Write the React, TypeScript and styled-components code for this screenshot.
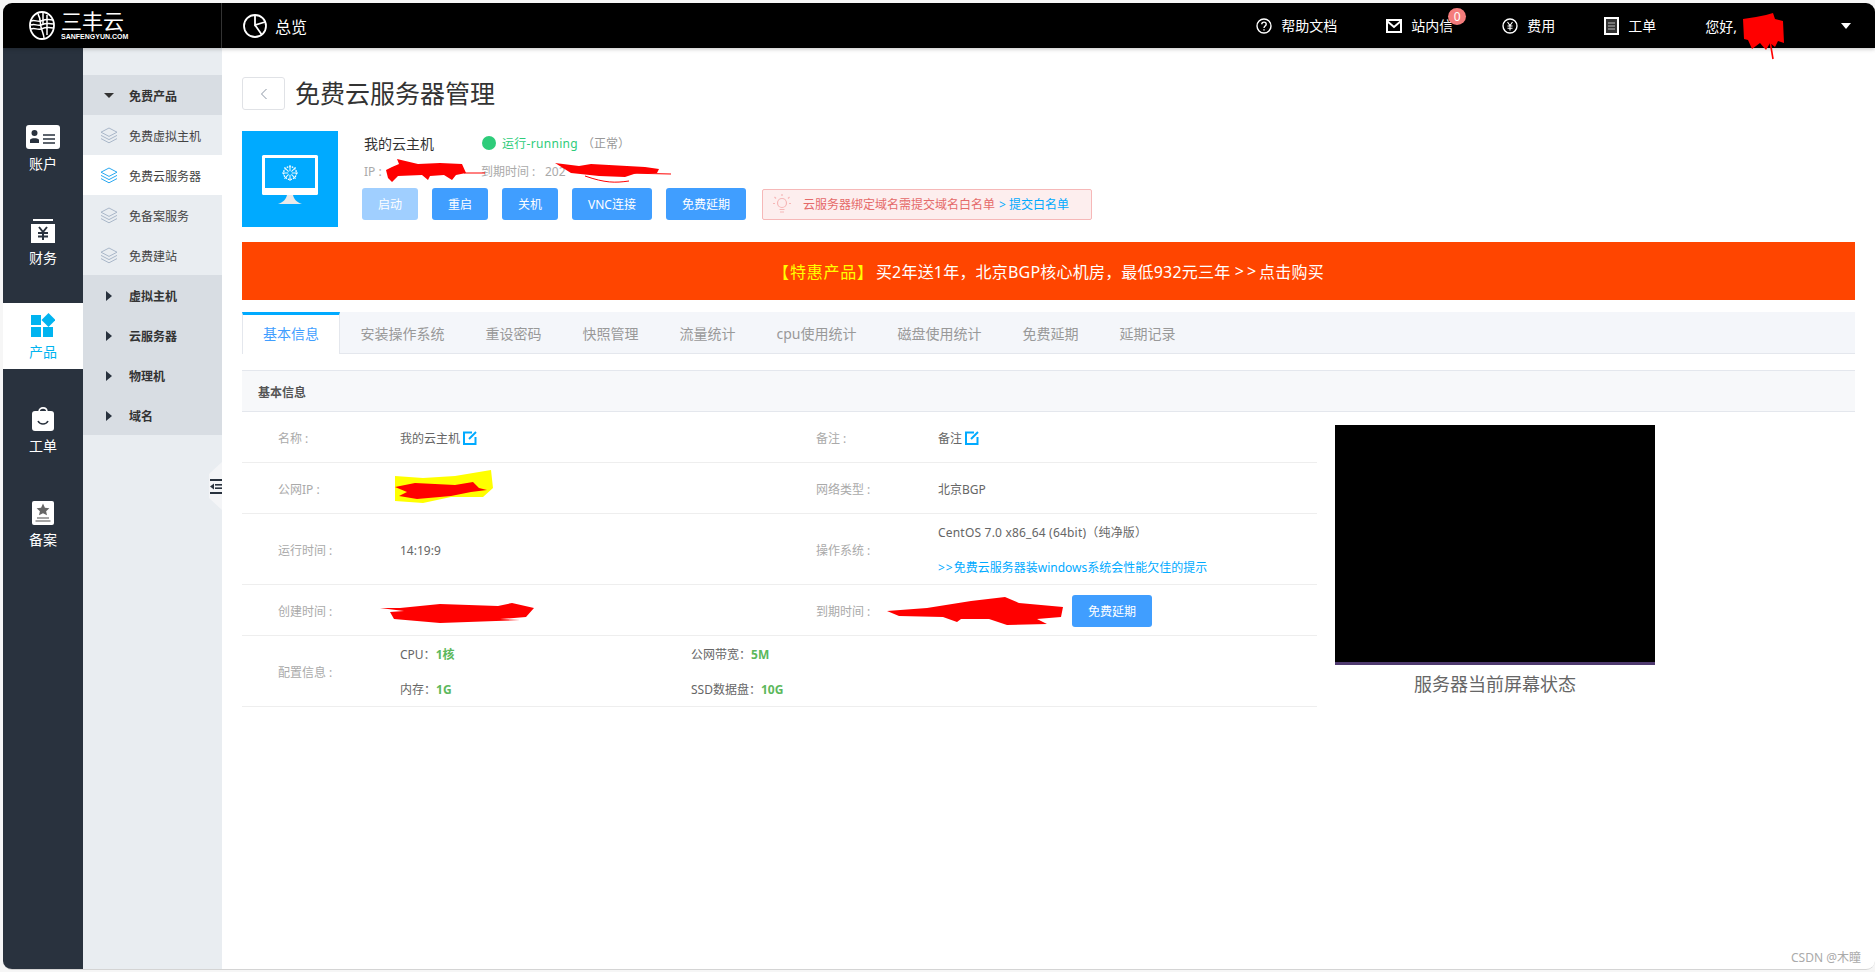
import React from 'react';
import styled, { createGlobalStyle } from 'styled-components';

const GlobalStyle = createGlobalStyle`
  html, body {
    margin: 0;
    padding: 0;
    background: #f6f6f6;
    font-family: "Noto Sans", "Noto Sans CJK SC", "Liberation Sans", sans-serif;
  }
  * { box-sizing: border-box; }
`;

const Page = styled.div`
  width: 1875px;
  height: 972px;
  padding: 3px 0 2px 3px;
  overflow: hidden;
`;

const Frame = styled.div`
  position: relative;
  height: 100%;
  display: flex;
  flex-direction: column;
  background: #fff;
  border-radius: 9px;
  border-bottom: 1px solid #d4d4d4;
  overflow: hidden;
`;

const TopBar = styled.header`
  position: relative;
  z-index: 5;
  flex: 0 0 45px;
  display: flex;
  align-items: center;
  background: #000;
  color: #fff;
  box-shadow: 0 1px 4px rgba(0, 0, 0, 0.25);
`;

const Brand = styled.div`
  width: 219px;
  height: 100%;
  display: flex;
  align-items: center;
  padding-left: 26px;
  gap: 6px;
  border-right: 1px solid #333;
`;

const BrandText = styled.div`
  display: flex;
  flex-direction: column;
  width: 64px;
`;

const BrandName = styled.span`
  font-size: 21px;
  line-height: 22px;
  font-weight: 400;
`;

const BrandSub = styled.span`
  margin-top: 1px;
  font-family: "Liberation Sans", sans-serif;
  font-size: 7px;
  line-height: 8px;
  font-weight: 700;
  white-space: nowrap;
`;

const Overview = styled.div`
  display: flex;
  align-items: center;
  gap: 8px;
  padding-left: 21px;
  font-size: 16px;
`;

const TopNav = styled.nav`
  margin-left: auto;
  display: flex;
  align-items: center;
  padding-right: 24px;
`;

const TopItem = styled.div`
  position: relative;
  display: flex;
  align-items: center;
  gap: 9px;
  margin-right: 49px;
  font-size: 14px;
  line-height: 20px;
`;

const Badge = styled.span`
  position: absolute;
  right: -13px;
  top: -8px;
  width: 18px;
  height: 17px;
  border-radius: 50%;
  background: #f47c7c;
  font-size: 12px;
  line-height: 17px;
  text-align: center;
`;

const Greeting = styled.span`
  font-size: 14px;
  margin-right: 5px;
`;

const NameSlot = styled.span`
  position: relative;
  width: 42px;
  height: 20px;
  margin-right: 57px;
`;

const Caret = styled.span`
  width: 0;
  height: 0;
  border-left: 5px solid transparent;
  border-right: 5px solid transparent;
  border-top: 6px solid #fff;
`;

const Scribble = styled.svg<{ $x: number; $y: number }>`
  position: absolute;
  left: ${(p) => p.$x}px;
  top: ${(p) => p.$y}px;
  z-index: 3;
  overflow: visible;
  pointer-events: none;
`;

const Body = styled.div`
  flex: 1;
  display: flex;
  min-height: 0;
`;

const Rail = styled.aside`
  flex: 0 0 80px;
  display: flex;
  flex-direction: column;
  gap: 28px;
  padding-top: 67px;
  background: #29323e;
`;

const RailItem = styled.div<{ $active?: boolean }>`
  height: 66px;
  display: flex;
  flex-direction: column;
  align-items: center;
  padding-top: 10px;
  background: ${(p) => (p.$active ? '#fff' : 'transparent')};
  color: ${(p) => (p.$active ? '#00b4f0' : '#fff')};
`;

const RailIcon = styled.svg`
  display: block;
  flex: none;
`;

const RailLabel = styled.span`
  margin-top: 5px;
  font-size: 14px;
  line-height: 20px;
`;

const SubNav = styled.aside`
  position: relative;
  flex: 0 0 139px;
  padding-top: 27px;
  background: #e9edf1;
`;

const SubRow = styled.div<{ $head?: boolean; $active?: boolean }>`
  height: 40px;
  display: flex;
  align-items: center;
  padding-top: 1px;
  font-size: 12px;
  font-weight: ${(p) => (p.$head ? 700 : 400)};
  color: ${(p) => (p.$head ? '#333' : '#444')};
  background: ${(p) => (p.$head ? '#d8dde3' : p.$active ? '#fff' : 'transparent')};
`;

const SubIconSlot = styled.span`
  width: 46px;
  display: flex;
  justify-content: center;
  padding-left: 6px;
`;

const TriDown = styled.span`
  width: 0;
  height: 0;
  border-left: 5px solid transparent;
  border-right: 5px solid transparent;
  border-top: 5px solid #333;
`;

const TriRight = styled.span`
  width: 0;
  height: 0;
  border-top: 5px solid transparent;
  border-bottom: 5px solid transparent;
  border-left: 6px solid #29323e;
`;

const Collapse = styled.div`
  position: absolute;
  right: 0;
  top: 414px;
  width: 13px;
  height: 48px;
  display: flex;
  align-items: center;
  justify-content: flex-end;
  background: #f4f5f7;
  clip-path: polygon(100% 0, 100% 100%, 0 75%, 0 25%);
`;

const Main = styled.main`
  flex: 1;
  min-width: 0;
  padding: 29px 20px 0;
`;

const TitleRow = styled.div`
  display: flex;
  align-items: center;
  gap: 10px;
  height: 33px;
`;

const BackButton = styled.button`
  width: 43px;
  height: 33px;
  padding: 0;
  display: flex;
  align-items: center;
  justify-content: center;
  background: #fff;
  border: 1px solid #e0e2e6;
  border-radius: 3px;
`;

const PageTitle = styled.h1`
  margin: 0;
  font-size: 25px;
  line-height: 33px;
  font-weight: 400;
  color: #333;
`;

const ServerCard = styled.section`
  margin-top: 21px;
  display: flex;
  height: 96px;
`;

const ServerThumb = styled.div`
  flex: 0 0 96px;
  background: #00aaff;
`;

const ServerInfo = styled.div`
  margin-left: 26px;
  display: flex;
  flex-direction: column;
`;

const NameLine = styled.div`
  display: flex;
  align-items: center;
  height: 23px;
  font-size: 14px;
  color: #333;
`;

const StatusDot = styled.span`
  width: 14px;
  height: 14px;
  margin: 0 6px 0 48px;
  border-radius: 50%;
  background: #2ecc7a;
`;

const StatusText = styled.span`
  font-size: 12px;
  letter-spacing: 0.3px;
  color: #2ecc7a;
`;

const StatusNote = styled.span`
  margin-left: 4px;
  font-size: 12px;
  color: #999;
`;

const IpLine = styled.div`
  position: relative;
  height: 22px;
  margin-top: 6px;
  display: flex;
  align-items: center;
  font-size: 12px;
  color: #aaa;
`;

const IpLabel = styled.span`
  width: 117px;
`;

const ExpireLabel = styled.span`
  width: 64px;
`;

const ActionRow = styled.div`
  margin-top: 6px;
  margin-left: -2px;
  display: flex;
  align-items: center;
  gap: 14px;
`;

const ActionButton = styled.button<{ $disabled?: boolean }>`
  height: 32px;
  padding: 0 16px;
  border: 0;
  border-radius: 3px;
  font-family: inherit;
  font-size: 12px;
  color: #fff;
  white-space: nowrap;
  background: ${(p) => (p.$disabled ? '#a0cfff' : '#409eff')};
`;

const Notice = styled.div`
  margin-left: 2px;
  width: 330px;
  height: 31px;
  display: flex;
  align-items: center;
  padding-left: 10px;
  gap: 12px;
  font-size: 12px;
  color: #e56a6a;
  background: #fdeeee;
  border: 1px solid #f6b8b8;
  border-radius: 2px;
`;

const NoticeLink = styled.span`
  margin-left: 4px;
  color: #00aaff;
`;

const Banner = styled.div`
  margin-top: 15px;
  height: 58px;
  display: flex;
  align-items: center;
  justify-content: center;
  background: #ff4500;
  color: #fff;
  font-size: 16px;
  letter-spacing: 0.2px;
  white-space: pre;
`;

const BannerTag = styled.span`
  color: #ffff00;
  letter-spacing: 0.8px;
  margin-right: 2px;
`;

const Arrows = styled.span<{ $gap: number }>`
  letter-spacing: ${(p) => p.$gap}px;
`;

const Tabs = styled.div`
  margin-top: 12px;
  height: 42px;
  display: flex;
  background: #f4f6fa;
  border-bottom: 1px solid #e4e7ed;
`;

const Tab = styled.div<{ $active?: boolean }>`
  height: ${(p) => (p.$active ? 42 : 41)}px;
  padding: ${(p) => (p.$active ? '0 20px 3px' : '0 20.5px')};
  display: flex;
  align-items: center;
  font-size: 14px;
  color: ${(p) => (p.$active ? '#409eff' : '#999')};
  background: ${(p) => (p.$active ? '#fff' : 'transparent')};
  border-top: ${(p) => (p.$active ? '3px solid #00aaff' : '0')};
  border-left: ${(p) => (p.$active ? '1px solid #e4e7ed' : '0')};
  border-right: ${(p) => (p.$active ? '1px solid #e4e7ed' : '0')};
`;

const SectionHead = styled.div`
  margin-top: 16px;
  height: 42px;
  display: flex;
  align-items: center;
  padding: 1px 0 0 16px;
  font-size: 12px;
  font-weight: 700;
  color: #555;
  background: #f7f8fa;
  border-top: 1px solid #e4e7ed;
  border-bottom: 1px solid #e4e7ed;
`;

const Detail = styled.div`
  display: flex;
  align-items: flex-start;
`;

const Table = styled.div`
  flex: 0 0 1075px;
`;

const Row = styled.div<{ $tall?: boolean }>`
  position: relative;
  height: ${(p) => (p.$tall ? 71 : 51)}px;
  display: grid;
  grid-template-columns: 538px 1fr;
  padding-top: 1px;
  border-bottom: 1px solid #eee;
  font-size: 12px;
  color: #666;
`;

const Cell = styled.div`
  position: relative;
  display: flex;
  align-items: center;
`;

const Label = styled.span`
  flex: 0 0 158px;
  padding-left: 36px;
  color: #aaa;
  white-space: pre;
`;

const Lines = styled.div`
  display: flex;
  flex-direction: column;
  line-height: 35px;
`;

const OsName = styled.span`
  letter-spacing: 0.2px;
`;

const BlueLink = styled.span`
  color: #00aaff;
`;

const ConfigGrid = styled.div`
  flex: none;
  display: grid;
  grid-template-columns: 291px max-content;
  line-height: 35px;
  white-space: nowrap;
`;

const Spec = styled.b`
  color: #5cb85c;
  font-weight: 700;
`;

const EditIcon = styled.svg`
  margin-left: 3px;
`;

const RenewButton = styled.button`
  position: absolute;
  left: 292px;
  top: 9px;
  width: 80px;
  height: 32px;
  border: 0;
  border-radius: 3px;
  font-family: inherit;
  font-size: 12px;
  color: #fff;
  background: #409eff;
`;

const ScreenPane = styled.div`
  margin: 13px 0 0 18px;
  width: 320px;
`;

const ScreenBox = styled.div`
  height: 240px;
  background: #000;
  border-bottom: 3px solid #4f3a6f;
`;

const ScreenCaption = styled.div`
  margin-top: 7px;
  font-size: 18px;
  line-height: 24px;
  text-align: center;
  color: #666;
`;

const Watermark = styled.div`
  position: absolute;
  right: 14px;
  bottom: 3px;
  font-size: 12px;
  line-height: 16px;
  color: #aaa;
`;

const Layers = ({ color }: { color: string }) => (
  <svg width="18" height="17" viewBox="0 0 18 17" fill="none" stroke={color} strokeWidth="1">
    <path d="M9 1 17 5.2 9 9.4 1 5.2Z" />
    <path d="M1 8.4 9 12.6 17 8.4" />
    <path d="M1 11.6 9 15.8 17 11.6" />
  </svg>
);

const Edit = () => (
  <EditIcon width="14" height="14" viewBox="0 0 14 14" fill="none" stroke="#00aaff" strokeWidth="2">
    <path d="M9 1.5H1V13H12.5V6" />
    <path d="M6 8 13 1" />
  </EditIcon>
);

const Red = '#ff0000';

const App = () => (
  <Page>
    <GlobalStyle />
    <Frame>
      <TopBar>
        <Brand>
          <svg width="26" height="29" viewBox="0 0 26 29" fill="none" stroke="#fff">
            <ellipse cx="13" cy="14.5" rx="12" ry="13.5" strokeWidth="1.8" />
            <path d="M2 10c4-2 6 1.5 10 0s7-2 12-1M2 14c4-2 6 1.5 10 0s7-2 12-1M2 18c4-2 6 1.5 10 0s7-2 12-1" strokeWidth="1.5" />
            <path d="M9 3C12 8 11 12 12 16S15 24 15 27M14 2V13M18 4V24" strokeWidth="1.5" />
          </svg>
          <BrandText>
            <BrandName>三丰云</BrandName>
            <BrandSub>SANFENGYUN.COM</BrandSub>
          </BrandText>
        </Brand>
        <Overview>
          <svg width="24" height="24" viewBox="0 0 24 24" fill="none" stroke="#fff" strokeWidth="1.8">
            <circle cx="12" cy="12" r="11" />
            <path d="M12 1V11L22 8M12 11 19 21" />
          </svg>
          总览
        </Overview>
        <TopNav>
          <TopItem>
            <svg width="16" height="16" viewBox="0 0 16 16" fill="none" stroke="#fff" strokeWidth="1.4">
              <circle cx="8" cy="8" r="7" />
              <path d="M5.8 6.2C5.8 3.4 10.2 3.4 10.2 6.2 10.2 8 8 8 8 10M8 11.2V12.6" />
            </svg>
            帮助文档
          </TopItem>
          <TopItem>
            <svg width="16" height="14" viewBox="0 0 16 14" fill="none" stroke="#fff" strokeWidth="2">
              <rect x="1" y="1" width="14" height="12" />
              <path d="M1 2 8 8 15 2" />
            </svg>
            站内信
            <Badge>0</Badge>
          </TopItem>
          <TopItem>
            <svg width="16" height="16" viewBox="0 0 16 16" fill="none" stroke="#fff" strokeWidth="1.4">
              <circle cx="8" cy="8" r="7" />
              <path d="M5.5 4 8 7.5 10.5 4M8 7.5V12.5M5.5 8H10.5M5.5 10.2H10.5" strokeWidth="1.1" />
            </svg>
            费用
          </TopItem>
          <TopItem>
            <svg width="15" height="18" viewBox="0 0 15 18" fill="none" stroke="#fff" strokeWidth="2">
              <rect x="1" y="1" width="13" height="16" fill="#333" />
              <path d="M4 6H11M4 9H11M4 12H11" stroke="#bbb" strokeWidth="1.2" />
            </svg>
            工单
          </TopItem>
          <Greeting>您好,</Greeting>
          <NameSlot>
            <Scribble $x={0} $y={-3} width="42" height="46" viewBox="0 0 42 46">
              <path d="M1 6 14 4 24 2 31 0 33 6 41 8 42 30 36 28 33 34 28 30 24 37 18 30 10 36 6 27 2 26Z" fill={Red} />
              <path d="M28 28 31 46" stroke={Red} strokeWidth="1.6" fill="none" />
            </Scribble>
          </NameSlot>
          <Caret />
        </TopNav>
      </TopBar>
      <Body>
        <Rail>
          <RailItem>
            <RailIcon width="34" height="24" viewBox="0 0 34 24">
              <rect width="34" height="24" rx="3" fill="#fff" />
              <circle cx="8.5" cy="8" r="3" fill="#29323e" />
              <path d="M4 18V15C4 12.5 13 12.5 13 15V18Z" fill="#29323e" />
              <path d="M17 10H29M17 14H29M17 18H29" stroke="#29323e" strokeWidth="1.6" />
            </RailIcon>
            <RailLabel>账户</RailLabel>
          </RailItem>
          <RailItem>
            <RailIcon width="24" height="24" viewBox="0 0 24 24">
              <rect x="2" width="20" height="2" fill="#fff" />
              <rect y="5" width="24" height="19" fill="#fff" />
              <path d="M8 8 12 13 16 8M12 13V21M7 14H17M7 17.5H17" stroke="#29323e" strokeWidth="2" fill="none" />
            </RailIcon>
            <RailLabel>财务</RailLabel>
          </RailItem>
          <RailItem $active>
            <RailIcon width="24" height="24" viewBox="0 0 24 24" fill="#00b4f0">
              <rect y="2" width="10" height="10" />
              <path d="M17.5 0 24.5 7 17.5 14 10.5 7Z" />
              <rect y="14" width="10" height="10" />
              <rect x="12" y="14" width="10" height="10" />
            </RailIcon>
            <RailLabel>产品</RailLabel>
          </RailItem>
          <RailItem>
            <RailIcon width="22" height="24" viewBox="0 0 22 24">
              <path d="M7 5C7 -0.5 15 -0.5 15 5" fill="none" stroke="#fff" strokeWidth="1.6" />
              <rect y="4" width="22" height="20" rx="3" fill="#fff" />
              <path d="M6 14C8 18 14 18 16 14" fill="none" stroke="#29323e" strokeWidth="1.6" />
            </RailIcon>
            <RailLabel>工单</RailLabel>
          </RailItem>
          <RailItem>
            <RailIcon width="22" height="24" viewBox="0 0 22 24">
              <rect width="22" height="24" rx="2" fill="#fff" />
              <path d="M11 2.5 13.4 7.6 19 8.2 14.9 12 16 17 11 14.6 6 17 7.1 12 3 8.2 8.6 7.6Z" fill="#666" transform="translate(2.2 0.6) scale(0.8)" />
              <path d="M5 17H17M3.5 20H18.5" stroke="#888" strokeWidth="1.4" />
            </RailIcon>
            <RailLabel>备案</RailLabel>
          </RailItem>
        </Rail>
        <SubNav>
          <SubRow $head>
            <SubIconSlot><TriDown /></SubIconSlot>免费产品
          </SubRow>
          <SubRow>
            <SubIconSlot><Layers color="#a9b7c9" /></SubIconSlot>免费虚拟主机
          </SubRow>
          <SubRow $active>
            <SubIconSlot><Layers color="#2aa8f0" /></SubIconSlot>免费云服务器
          </SubRow>
          <SubRow>
            <SubIconSlot><Layers color="#a9b7c9" /></SubIconSlot>免备案服务
          </SubRow>
          <SubRow>
            <SubIconSlot><Layers color="#a9b7c9" /></SubIconSlot>免费建站
          </SubRow>
          <SubRow $head>
            <SubIconSlot><TriRight /></SubIconSlot>虚拟主机
          </SubRow>
          <SubRow $head>
            <SubIconSlot><TriRight /></SubIconSlot>云服务器
          </SubRow>
          <SubRow $head>
            <SubIconSlot><TriRight /></SubIconSlot>物理机
          </SubRow>
          <SubRow $head>
            <SubIconSlot><TriRight /></SubIconSlot>域名
          </SubRow>
          <Collapse>
            <svg width="12" height="15" viewBox="0 0 12 15" fill="#29323e">
              <rect width="12" height="2" />
              <rect y="13" width="12" height="2" />
              <rect x="5" y="5" width="7" height="1.6" />
              <rect x="5" y="8.4" width="7" height="1.6" />
              <path d="M0 7.5 4 4.5V10.5Z" />
            </svg>
          </Collapse>
        </SubNav>
        <Main>
          <TitleRow>
            <BackButton>
              <svg width="8" height="12" viewBox="0 0 8 12" fill="none" stroke="#8a94a3" strokeWidth="1">
                <path d="M6.5 1 1.5 6 6.5 11" />
              </svg>
            </BackButton>
            <PageTitle>免费云服务器管理</PageTitle>
          </TitleRow>
          <ServerCard>
            <ServerThumb>
              <svg width="96" height="96" viewBox="0 0 96 96">
                <rect x="20" y="24" width="56" height="40" rx="1.5" fill="#fff" />
                <rect x="23" y="27" width="50" height="30" fill="#00aaff" />
                <path d="M36 73C42 71 44 68 45 64H51C52 68 54 71 60 73Z" fill="#e9e9e9" />
                <circle cx="48" cy="42" r="6.4" fill="none" stroke="#fff" strokeWidth="1.4" strokeDasharray="1.6 1" />
                <path d="M48 34V50M40 42H56M42.4 36.4 53.6 47.6M53.6 36.4 42.4 47.6" stroke="#e6f7ff" strokeWidth="1.1" />
                <circle cx="48" cy="42" r="2" fill="#00aaff" />
              </svg>
            </ServerThumb>
            <ServerInfo>
              <NameLine>
                我的云主机
                <StatusDot />
                <StatusText>运行-running</StatusText>
                <StatusNote>（正常）</StatusNote>
              </NameLine>
              <IpLine>
                <IpLabel>IP :</IpLabel>
                <ExpireLabel>到期时间 :</ExpireLabel>
                202
                <Scribble $x={22} $y={-1} width="100" height="23" viewBox="0 0 100 23">
                  <path d="M0 11 6 8 13 5 11 0 32 5 54 4 76 5 80 14 70 16 66 21 58 16 44 17 42 21 36 16 12 17 6 23 2 19Z" fill={Red} />
                  <path d="M78 14H99" stroke={Red} strokeWidth="1" />
                </Scribble>
                <Scribble $x={191} $y={3} width="116" height="20" viewBox="0 0 116 20">
                  <path d="M0 0 24 3 36 1 90 4 104 6 102 10 82 10 70 14 44 13 16 10 8 5Z" fill={Red} />
                  <path d="M70 10 116 11M30 13C50 20 60 20 74 18" stroke={Red} strokeWidth="1" fill="none" />
                </Scribble>
              </IpLine>
              <ActionRow>
                <ActionButton $disabled>启动</ActionButton>
                <ActionButton>重启</ActionButton>
                <ActionButton>关机</ActionButton>
                <ActionButton>VNC连接</ActionButton>
                <ActionButton>免费延期</ActionButton>
                <Notice>
                  <svg width="18" height="20" viewBox="0 0 18 20" fill="none" stroke="#f6b7b7" strokeWidth="1.2">
                    <circle cx="9" cy="9" r="4.5" />
                    <path d="M6.5 15.5H11.5M7 18H11M9 0V2M1.5 3 3 4.5M16.5 3 15 4.5M0 9.5H2M16 9.5H18" />
                  </svg>
                  <span>
                    云服务器绑定域名需提交域名白名单
                    <NoticeLink>&gt; 提交白名单</NoticeLink>
                  </span>
                </Notice>
              </ActionRow>
            </ServerInfo>
          </ServerCard>
          <Banner>
            <BannerTag>【特惠产品】</BannerTag>
            买2年送1年，北京BGP核心机房，最低932元三年 <Arrows $gap={3}>&gt;&gt;</Arrows>点击购买
          </Banner>
          <Tabs>
            <Tab $active>基本信息</Tab>
            <Tab>安装操作系统</Tab>
            <Tab>重设密码</Tab>
            <Tab>快照管理</Tab>
            <Tab>流量统计</Tab>
            <Tab>cpu使用统计</Tab>
            <Tab>磁盘使用统计</Tab>
            <Tab>免费延期</Tab>
            <Tab>延期记录</Tab>
          </Tabs>
          <SectionHead>基本信息</SectionHead>
          <Detail>
            <Table>
              <Row>
                <Cell>
                  <Label>名称 :</Label>
                  我的云主机
                  <Edit />
                </Cell>
                <Cell>
                  <Label>备注 :</Label>
                  备注
                  <Edit />
                </Cell>
              </Row>
              <Row>
                <Cell>
                  <Label>公网IP :</Label>
                  <Scribble $x={153} $y={6} width="98" height="33" viewBox="0 0 98 33">
                    <path d="M0 6 28 8 60 6 96 0 98 18 88 27 56 27 28 33 0 31Z" fill="#ffff00" />
                    <path d="M0 17 20 13 60 15 78 12 84 18 92 20 76 22 56 26 22 29 4 26 12 22Z" fill={Red} />
                  </Scribble>
                </Cell>
                <Cell>
                  <Label>网络类型 :</Label>
                  北京BGP
                </Cell>
              </Row>
              <Row $tall>
                <Cell>
                  <Label>运行时间 :</Label>
                  14:19:9
                </Cell>
                <Cell>
                  <Label>操作系统 :</Label>
                  <Lines>
                    <OsName>CentOS 7.0 x86_64 (64bit)（纯净版）</OsName>
                    <BlueLink><Arrows $gap={1}>&gt;&gt;</Arrows>免费云服务器装windows系统会性能欠佳的提示</BlueLink>
                  </Lines>
                </Cell>
              </Row>
              <Row>
                <Cell>
                  <Label>创建时间 :</Label>
                  <Scribble $x={138} $y={17} width="154" height="20" viewBox="0 0 154 20">
                    <path d="M0 5 20 5 60 1 118 3 132 0 154 5 146 14 120 16 140 17 60 20 14 16 10 9 24 8Z" fill={Red} />
                  </Scribble>
                </Cell>
                <Cell>
                  <Label>到期时间 :</Label>
                  <Scribble $x={107} $y={11} width="176" height="28" viewBox="0 0 176 28">
                    <path d="M0 14 40 11 84 4 118 0 132 6 176 10 174 20 150 22 160 27 120 28 102 22 74 22 70 25 56 20 12 19Z" fill={Red} />
                  </Scribble>
                  <RenewButton>免费延期</RenewButton>
                </Cell>
              </Row>
              <Row $tall>
                <Cell>
                  <Label>配置信息 :</Label>
                  <ConfigGrid>
                    <span>CPU：<Spec>1核</Spec></span>
                    <span>公网带宽：<Spec>5M</Spec></span>
                    <span>内存：<Spec>1G</Spec></span>
                    <span>SSD数据盘：<Spec>10G</Spec></span>
                  </ConfigGrid>
                </Cell>
                <Cell />
              </Row>
            </Table>
            <ScreenPane>
              <ScreenBox />
              <ScreenCaption>服务器当前屏幕状态</ScreenCaption>
            </ScreenPane>
          </Detail>
        </Main>
      </Body>
      <Watermark>CSDN @木瞳</Watermark>
    </Frame>
  </Page>
);

export default App;
